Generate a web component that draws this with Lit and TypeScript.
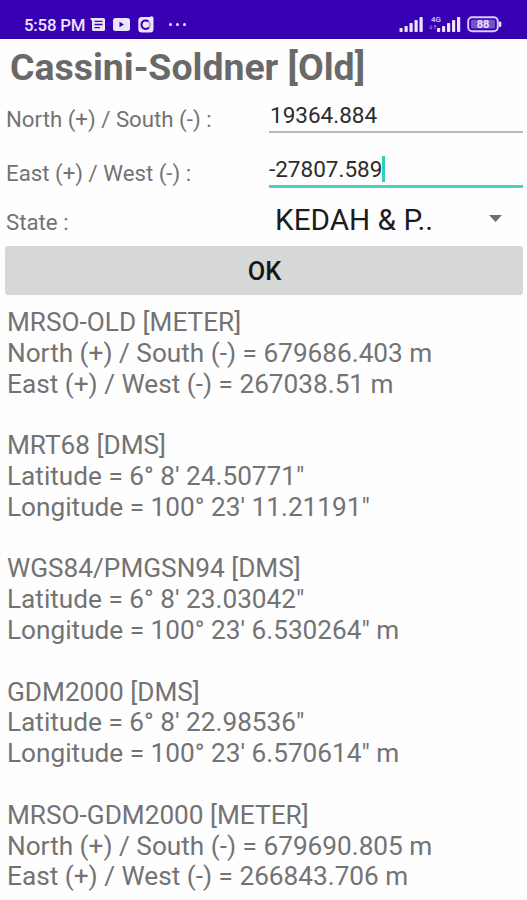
import { LitElement, html, css, svg } from "lit";
import { customElement } from "lit/decorators.js";

const RESULTS: string[][] = [
  ["MRSO-OLD [METER]", "North (+) / South (-) = 679686.403 m", "East (+) / West (-) = 267038.51 m"],
  ["MRT68 [DMS]", "Latitude = 6° 8' 24.50771\"", "Longitude = 100° 23' 11.21191\""],
  ["WGS84/PMGSN94 [DMS]", "Latitude = 6° 8' 23.03042\"", "Longitude = 100° 23' 6.530264\" m"],
  ["GDM2000 [DMS]", "Latitude = 6° 8' 22.98536\"", "Longitude = 100° 23' 6.570614\" m"],
  ["MRSO-GDM2000 [METER]", "North (+) / South (-) = 679690.805 m", "East (+) / West (-) = 266843.706 m"],
];

const bars = [4, 6, 9, 12, 15];

@customElement("status-bar")
export class StatusBar extends LitElement {
  static styles = css`
    :host {
      display: flex;
      box-sizing: border-box;
      height: 39px;
      padding: 14px 25px 0 24px;
      background: #3700b3;
      border-bottom: 1px solid #2a009f;
      color: #ece4fb;
      font: 500 16.8px/22px Roboto, sans-serif;
    }
    .time { width: 66px; white-space: nowrap; letter-spacing: -0.2px; }
    svg { display: block; flex: none; fill: #ece4fb; }
    .notes { margin-top: 2px; }
    .spacer { flex: 1; }
    .signal { margin: 2px 4px 0 0; }
    .cell { margin: 0 6px 0 0; }
    .battery { margin: 2px 0 0; }
    .tiny { font: 700 8px Roboto, sans-serif; fill: #c9b6f2; }
    .level { font: 700 11px Roboto, sans-serif; }
  `;

  private signal(x: number, y: number) {
    return bars.map((h, i) => svg`<rect x=${x + i * 5} y=${y + 15 - h} width="3.2" height=${h} rx="0.8"/>`);
  }

  render() {
    return html`
      <span class="time">5:58 PM</span>
      <svg class="notes" width="98" height="18" viewBox="90 16 98 18">
        <path fill-rule="evenodd" d="M90 18h13.500q1.500 0 1.500 1.500v10q0 1.500-1.500 1.500h-10q-1.500 0-1.500-1.500v-8.500zM94.500 20.700v1.400h8v-1.400zM94.500 23.800v1.400h8v-1.400zM94.500 26.900v1.400h5.500v-1.400z"/>
        <path fill-rule="evenodd" d="M115.500 18h12q2.500 0 2.500 2.500v8q0 2.500-2.500 2.500h-12q-2.500 0-2.500-2.500v-8q0-2.500 2.500-2.500zM119.500 21.800v5.400l4.500-2.700z"/>
        <rect x="138.300" y="17" width="15.200" height="15.500" rx="3.500"/>
        <circle cx="151.500" cy="18.300" r="2"/>
        <path d="M148.500 21.400a4.300 4.300 0 1 0 .6 6" fill="none" stroke="#3700b3" stroke-width="2"/>
        <path d="M148.500 21.600a4 4 0 0 1 .6 5.800" fill="none" stroke="#9a7fdd" stroke-width="1.300"/>
        <circle cx="170.500" cy="24.500" r="1.500"/><circle cx="177.500" cy="24.500" r="1.500"/><circle cx="184.500" cy="24.500" r="1.500"/>
      </svg>
      <span class="spacer"></span>
      <svg class="signal" width="25" height="17">${this.signal(0.5, 1)}</svg>
      <svg class="cell" width="33" height="19">
        <text class="tiny" x="3" y="7.500">4G</text>
        <path d="M3 11v4m-1.500-1.500L3 15l1.500-1.500M7 15v-4m-1.500 1.500L7 11l1.500 1.500" fill="none" stroke="#8d70d8"/>
        ${this.signal(9, 3)}
      </svg>
      <svg class="battery" width="35" height="17">
        <rect x="1.200" y="1.200" width="29.600" height="14" rx="4" fill="none" stroke="#d9cdf6" stroke-width="2"/>
        <rect x="4" y="3.800" width="24" height="8.800" rx="1.500" fill="#7650cf"/>
        <rect x="32" y="5.500" width="2.300" height="5.500" rx="1"/>
        <text class="level" x="16" y="12.200" text-anchor="middle">88</text>
      </svg>
    `;
  }
}

@customElement("app-root")
export class AppRoot extends LitElement {
  static styles = css`
    :host {
      display: block;
      height: 900px;
      overflow: hidden;
      background: #fefefe;
      color: #737373;
      font-family: Roboto, sans-serif;
    }
    .title {
      margin: 0;
      padding: 5px 10px 0;
      font: 700 37.400px/46px Roboto, sans-serif;
      color: #696969;
      white-space: nowrap;
    }
    .form {
      display: grid;
      grid-template-columns: 263px 1fr;
      grid-template-rows: 43px 55px 57px;
      padding: 0 4px 0 6px;
      font-size: 22.250px;
      line-height: 28px;
    }
    .label { padding-top: 15px; white-space: nowrap; }
    .label.east { padding-top: 26px; }
    .label.state { padding-top: 20px; }
    .field {
      box-sizing: border-box;
      height: 43px;
      padding: 11px 0 0 1px;
      border-bottom: 2px solid #b8b8b8;
      color: #2c2c2c;
      font-size: 22.500px;
      white-space: nowrap;
    }
    .field.active {
      display: flex;
      height: 55px;
      padding: 22px 0 0;
      border-bottom: 3px solid #4bcfbe;
    }
    .caret { width: 3px; height: 26px; margin-top: 1px; background: #2fd0bb; }
    .select {
      display: flex;
      align-items: center;
      justify-content: space-between;
      padding: 6px 21px 0 6px;
      font-size: 29.700px;
      color: #1c1c1c;
    }
    .arrow { margin-bottom: 3px; fill: #707070; }
    .ok {
      display: block;
      width: 518px;
      height: 49px;
      margin: 1px 0 0 5px;
      padding: 0 0 0 1px;
      border: 0;
      border-radius: 3px;
      background: #d6d8d7;
      color: #161616;
      font: 500 25.400px Roboto, sans-serif;
    }
    .results { padding: 12px 7px; font-size: 26.200px; line-height: 30.800px; white-space: pre; }
    .group { margin-bottom: 30.800px; }
  `;

  render() {
    return html`
      <status-bar></status-bar>
      <h1 class="title">Cassini-Soldner [Old]</h1>
      <div class="form">
        <span class="label">North (+) / South (-) :</span>
        <div class="field">19364.884</div>
        <span class="label east">East (+) / West (-) :</span>
        <div class="field active"><span>-27807.589</span><i class="caret"></i></div>
        <span class="label state">State :</span>
        <div class="select">
          <span>KEDAH &amp; P..</span>
          <svg class="arrow" width="13" height="7"><path d="M0 0h13l-6.500 7z"/></svg>
        </div>
      </div>
      <button class="ok">OK</button>
      <div class="results">${RESULTS.map(
        (g) => html`<div class="group">${g.map((line) => html`<div>${line}</div>`)}</div>`
      )}</div>
    `;
  }
}
